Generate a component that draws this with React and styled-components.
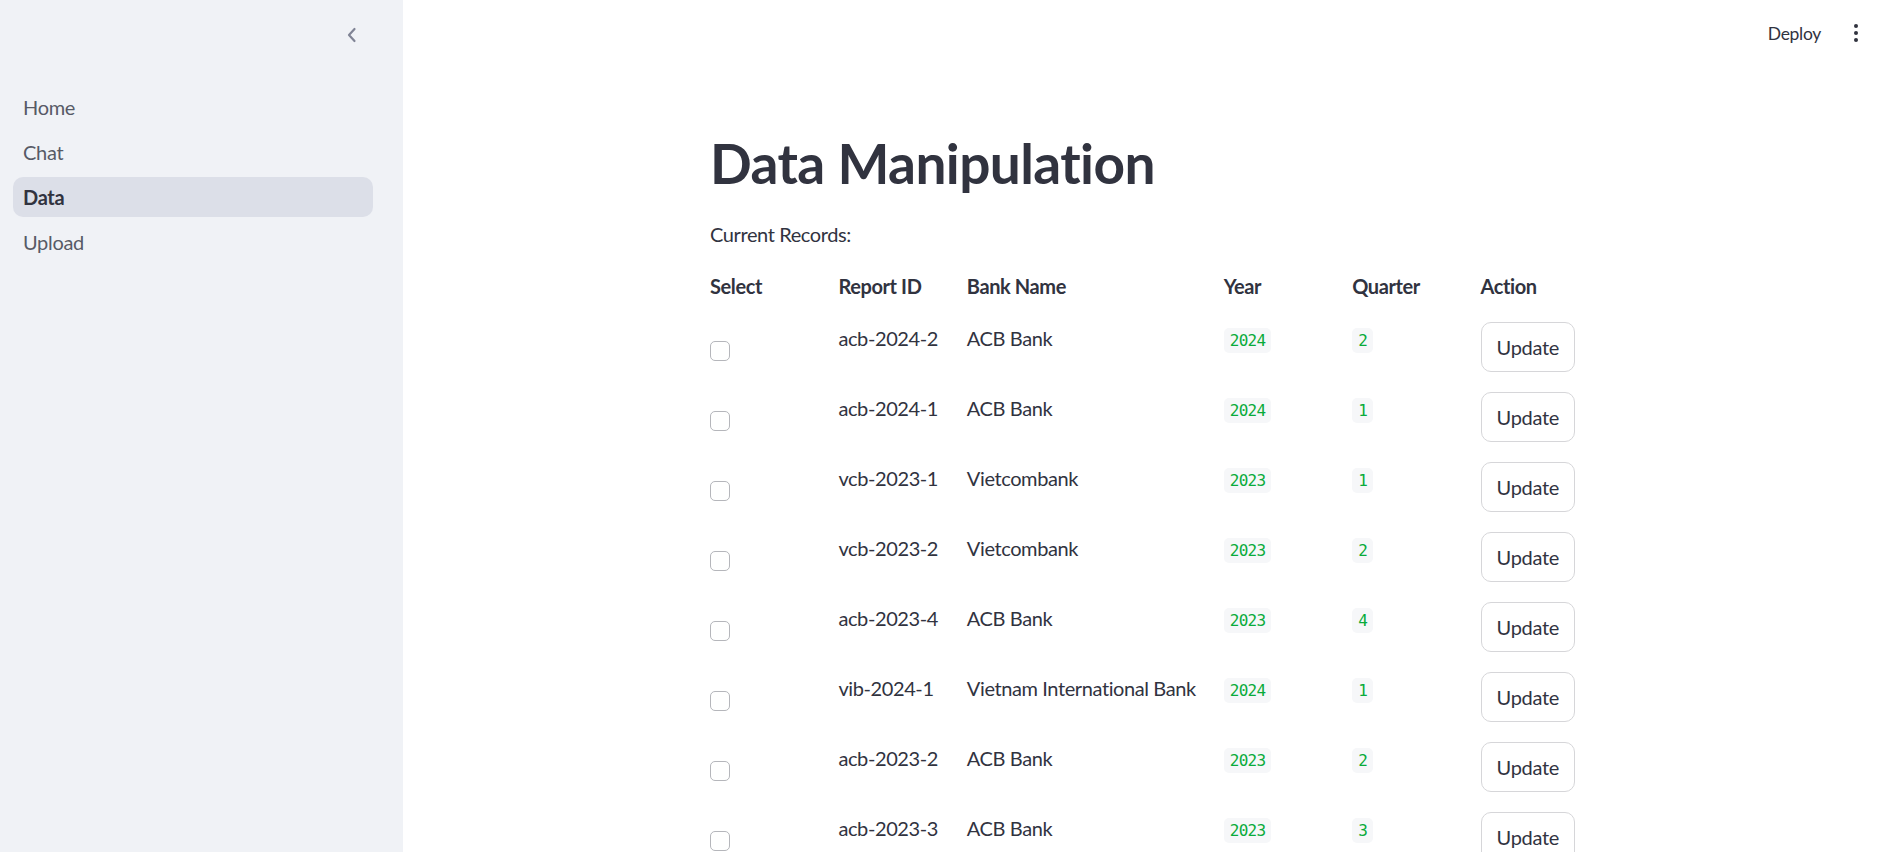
import React from 'react';
import styled, {createGlobalStyle} from 'styled-components';

const textColor = '#31333f';
const sidebarWidth = 403;

const GlobalStyle = createGlobalStyle`
  html, body {
    margin: 0;
    padding: 0;
    background: #ffffff;
    font-family: Lato, "Noto Sans", sans-serif;
    color: ${textColor};
  }
  * {
    box-sizing: border-box;
  }
`;

const Shell = styled.div`
  display: flex;
  height: 100vh;
  overflow: hidden;
`;

const Sidebar = styled.aside`
  width: ${sidebarWidth}px;
  flex-shrink: 0;
  background: #f0f2f6;
  display: flex;
  flex-direction: column;
`;

const SidebarHeader = styled.div`
  height: 70px;
  display: flex;
  align-items: center;
  justify-content: flex-end;
  padding-right: 46px;
  color: #808495;
`;

const NavList = styled.nav`
  display: flex;
  flex-direction: column;
  gap: 5px;
  padding: 17px 30px 0 13px;
`;

const NavItem = styled.a`
  display: flex;
  align-items: center;
  height: 40px;
  padding-left: 10px;
  border-radius: 10px;
  font-size: 20px;
  letter-spacing: -0.3px;
  text-decoration: none;
  color: ${p => (p.$active ? textColor : '#575a66')};
  font-weight: ${p => (p.$active ? 700 : 400)};
  background: ${p => (p.$active ? '#dcdfe8' : 'transparent')};
`;

const Main = styled.main`
  flex: 1;
  display: flex;
  flex-direction: column;
  padding-left: 10px;
  overflow: hidden;
`;

const TopBar = styled.header`
  height: 66px;
  flex-shrink: 0;
  display: flex;
  align-items: center;
  justify-content: flex-end;
  gap: 33px;
  padding-right: 29px;
`;

const DeployButton = styled.span`
  font-size: 17.5px;
  letter-spacing: -0.3px;
  color: ${textColor};
`;

const Kebab = styled.span`
  display: flex;
  flex-direction: column;
  gap: 3px;
  & > i {
    width: 4px;
    height: 4px;
    border-radius: 50%;
    background: ${textColor};
  }
`;

const Content = styled.div`
  width: 880px;
  margin: 0 auto;
  padding-top: 64px;
  display: flex;
  flex-direction: column;
  gap: 20px;
`;

const Title = styled.h1`
  margin: 0;
  padding-bottom: 2px;
  font-size: 55px;
  line-height: 1.2;
  font-weight: 700;
  letter-spacing: -0.6px;
  color: ${textColor};
`;

const Paragraph = styled.p`
  margin: 0;
  font-size: 20px;
  line-height: 32px;
  letter-spacing: -0.4px;
`;

const Table = styled.div`
  margin-right: -19px;
  display: grid;
  grid-template-columns: repeat(2, minmax(0, 1fr)) minmax(0, 2fr) repeat(3, minmax(0, 1fr));
  row-gap: 20px;
  grid-auto-rows: 50px;
  grid-template-rows: 32px;
`;

const HeadCell = styled.div`
  font-size: 20px;
  line-height: 32px;
  font-weight: 700;
  letter-spacing: -0.4px;
`;

const Cell = styled.div`
  font-size: 20px;
  line-height: 32px;
  letter-spacing: -0.4px;
  white-space: nowrap;
`;

const Checkbox = styled.span`
  display: block;
  margin-top: 19px;
  width: 20px;
  height: 20px;
  border: 1px solid #b5b6bb;
  border-radius: 5px;
  background: #ffffff;
`;

const Code = styled.code`
  display: inline-block;
  margin-top: 6px;
  padding: 0 6px;
  height: 25px;
  line-height: 25px;
  border-radius: 5px;
  background: #f6f7f9;
  color: #09ab3b;
  font-family: "DejaVu Sans Mono", "Liberation Mono", monospace;
  font-size: 16px;
  letter-spacing: -0.7px;
`;

const Button = styled.button`
  height: 50px;
  padding: 0 15px;
  border: 1px solid #d6d6d9;
  border-radius: 10px;
  background: #ffffff;
  color: ${textColor};
  font-family: inherit;
  font-size: 20px;
  letter-spacing: -0.3px;
  cursor: pointer;
`;

const ChevronLeft = () => (
  <svg width="10" height="16" viewBox="0 0 10 16">
    <path d="M7.5 2 L2 8 L7.5 14" fill="none" stroke="currentColor" strokeWidth="2.2" strokeLinecap="round" strokeLinejoin="round" />
  </svg>
);

const records = [
  ['acb-2024-2', 'ACB Bank', 2024, 2],
  ['acb-2024-1', 'ACB Bank', 2024, 1],
  ['vcb-2023-1', 'Vietcombank', 2023, 1],
  ['vcb-2023-2', 'Vietcombank', 2023, 2],
  ['acb-2023-4', 'ACB Bank', 2023, 4],
  ['vib-2024-1', 'Vietnam International Bank', 2024, 1],
  ['acb-2023-2', 'ACB Bank', 2023, 2],
  ['acb-2023-3', 'ACB Bank', 2023, 3],
];

const pages = ['Home', 'Chat', 'Data', 'Upload'];

export default function App() {
  return <Shell>
    <GlobalStyle />
    <Sidebar>
      <SidebarHeader><ChevronLeft /></SidebarHeader>
      <NavList>
        {pages.map(p => <NavItem key={p} $active={p === 'Data'}>{p}</NavItem>)}
      </NavList>
    </Sidebar>
    <Main>
      <TopBar>
        <DeployButton>Deploy</DeployButton>
        <Kebab><i /><i /><i /></Kebab>
      </TopBar>
      <Content>
        <Title>Data Manipulation</Title>
        <Paragraph>Current Records:</Paragraph>
        <Table>
          {['Select', 'Report ID', 'Bank Name', 'Year', 'Quarter', 'Action'].map(h =>
            <HeadCell key={h}>{h}</HeadCell>)}
          {records.map(([id, bank, year, quarter]) => <React.Fragment key={id}>
            <div><Checkbox /></div>
            <Cell>{id}</Cell>
            <Cell>{bank}</Cell>
            <div><Code>{year}</Code></div>
            <div><Code>{quarter}</Code></div>
            <div><Button>Update</Button></div>
          </React.Fragment>)}
        </Table>
      </Content>
    </Main>
  </Shell>;
}
